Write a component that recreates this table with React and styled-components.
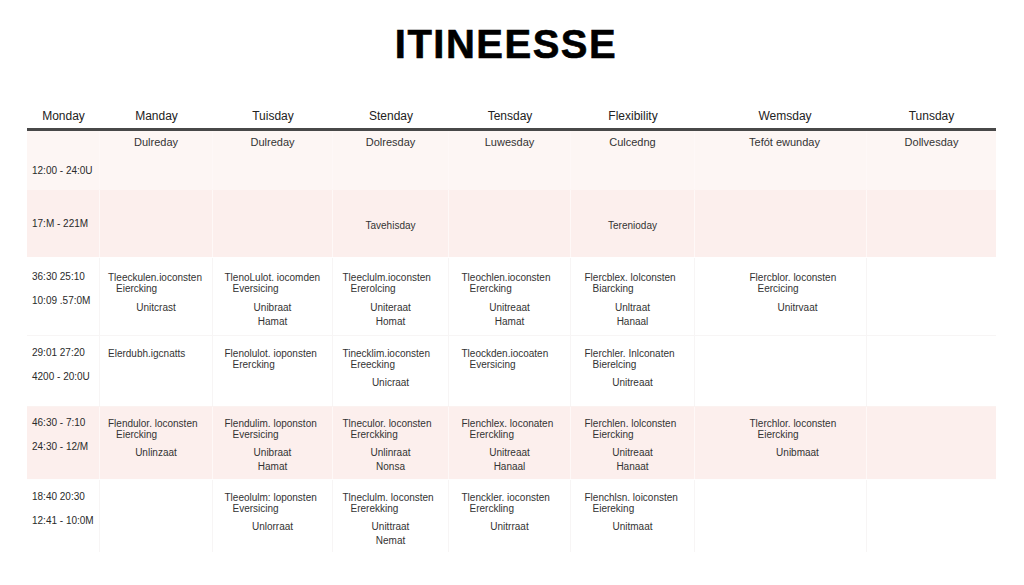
import React from "react";
import styled, { createGlobalStyle } from "styled-components";

const Global = createGlobalStyle`
  html, body { margin: 0; padding: 0; background: #ffffff; }
  body { font-family: "Liberation Sans", Arial, sans-serif; color: #222; }
`;

const COLS = "73px 113px 120px 116px 122px 124px 172px 129px";

const Page = styled.div`
  width: 1024px;
  height: 585px;
  background: #fff;
  padding-top: 24px;
  box-sizing: border-box;
  overflow: hidden;
`;

const Title = styled.h1`
  margin: 0 0 40px;
  text-align: center;
  font-family: "Liberation Sans", Arial, sans-serif;
  font-weight: 700;
  font-size: 40px;
  line-height: 40px;
  letter-spacing: 1.5px;
  color: #000;
  padding-right: 12px;
  -webkit-text-stroke: 0.6px #000;
`;

const Table = styled.div`
  margin-left: 27px;
  width: 969px;
  display: flex;
  flex-direction: column;
`;

const HeaderRow = styled.div`
  display: grid;
  grid-template-columns: ${COLS};
  height: 24px;
  border-bottom: 3px solid #484848;
`;

const HeadCell = styled.div`
  font-size: 12px;
  line-height: 24px;
  text-align: center;
  color: #222;
  padding-left: ${(p) => p.$shift || 0}px;
`;

const Row = styled.div`
  display: grid;
  grid-template-columns: ${COLS};
  height: ${(p) => p.$h}px;
  background: ${(p) => p.$bg};
  border-bottom: 1px solid ${(p) => p.$line};
  box-sizing: border-box;
`;

const Cell = styled.div`
  border-right: 1px solid ${(p) => p.$line};
  display: flex;
  flex-direction: column;
  align-items: center;
  padding-top: ${(p) => p.$pad}px;
  padding-left: ${(p) => p.$shift || 0}px;
  box-sizing: border-box;
  &:last-child { border-right: none; }
`;

const CenterCell = styled.div`
  border-right: 1px solid ${(p) => p.$line};
  display: flex;
  align-items: center;
  justify-content: center;
  padding-top: 4px;
  font-size: 10px;
  color: #333;
`;

const TimeCell = styled.div`
  border-right: 1px solid ${(p) => p.$line};
  display: flex;
  flex-direction: column;
  justify-content: ${(p) => p.$justify || "flex-start"};
  gap: 12px;
  padding: ${(p) => p.$pad}px 0 ${(p) => p.$padBottom || 0}px 5px;
  box-sizing: border-box;
`;

const Time = styled.div`
  font-size: 10px;
  line-height: 12px;
  color: #2a2a2a;
  white-space: nowrap;
`;

const DayLabel = styled.div`
  font-size: 11px;
  line-height: 12px;
  color: #333;
  white-space: nowrap;
`;

const Entry = styled.div`
  min-width: 96px;
  display: flex;
  flex-direction: column;
`;

const Line = styled.div`
  font-size: 10px;
  line-height: 11px;
  color: #333;
  white-space: nowrap;
  padding-left: ${(p) => (p.$indent ? 8 : 0)}px;
`;

const Sub = styled.div`
  font-size: 10px;
  line-height: 14px;
  color: #333;
  text-align: center;
  white-space: nowrap;
  margin-top: ${(p) => (p.$first ? p.$gap : 0)}px;
`;

const heads = ["Monday", "Manday", "Tuisday", "Stenday", "Tensday", "Flexibility", "Wemsday", "Tunsday"];
const labels = ["Dulreday", "Dulreday", "Dolresday", "Luwesday", "Culcedng", "Tefót ewunday", "Dollvesday"];

const PINK1 = "#fdf6f4";
const PINK2 = "#fcefed";
const SEAM_PINK = "#fef8f7";
const SEAM_WHITE = "#f7f5f5";

const rows = [
  {
    bg: "#ffffff", h: 78, pad: 13, line: SEAM_WHITE,
    times: ["36:30 25:10", "10:09 .57:0M"],
    cells: [
      ["Tleeckulen.ioconsten", "Eiercking", ["Unitcrast"]],
      ["TlenoLulot. iocomden", "Eversicing", ["Unibraat", "Hamat"]],
      ["Tleeclulm.ioconsten", "Ererolcing", ["Uniteraat", "Homat"]],
      ["Tleochlen.ioconsten", "Erercking", ["Unitreaat", "Hamat"]],
      ["Flercblex. lolconsten", "Biarcking", ["Unltraat", "Hanaal"]],
      ["Flercblor. loconsten", "Eercicing", ["Unitrvaat"]],
      null,
    ],
  },
  {
    bg: "#ffffff", h: 71, pad: 11, line: "#fbf2f0",
    times: ["29:01 27:20", "4200 - 20:0U"],
    cells: [
      ["Elerdubh.igcnatts", null, []],
      ["Flenolulot. ioponsten", "Erercking", []],
      ["Tinecklim.ioconsten", "Ereecking", ["Unicraat"]],
      ["Tleockden.iocoaten", "Eversicing", []],
      ["Flerchler. Inlconaten", "Bierelcing", ["Unitreaat"]],
      null,
      null,
    ],
  },
  {
    bg: PINK2, h: 73, pad: 10, line: "#fefefe",
    times: ["46:30 - 7:10", "24:30 - 12/M"],
    cells: [
      ["Flendulor. loconsten", "Eiercking", ["Unlinzaat"]],
      ["Flendulim. loponston", "Eversicing", ["Unibraat", "Hamat"]],
      ["Tlneculor. loconsten", "Ererckking", ["Unlinraat", "Nonsa"]],
      ["Flenchlex. loconaten", "Ererckling", ["Unitreaat", "Hanaal"]],
      ["Flerchlen. lolconsten", "Eiercking", ["Unitreaat", "Hanaat"]],
      ["Tlerchlor. loconsten", "Eiercking", ["Unibmaat"]],
      null,
    ],
  },
  {
    bg: "#ffffff", h: 73, pad: 11, line: "#ffffff",
    times: ["18:40 20:30", "12:41 - 10:0M"],
    cells: [
      null,
      ["Tleeolulm: loponsten", "Eversicing", ["Unlorraat"]],
      ["Tlneclulm. loconsten", "Ererekking", ["Unittraat", "Nemat"]],
      ["Tlenckler. ioconsten", "Ererckling", ["Unitrraat"]],
      ["Flenchlsn. loiconsten", "Eiereking", ["Unitmaat"]],
      null,
      null,
    ],
  },
];

function EntryBlock({ data, gap }) {
  if (!data) return null;
  const [l1, l2, subs] = data;
  return (
    <Entry>
      <Line>{l1}</Line>
      {l2 && <Line $indent>{l2}</Line>}
      {subs.map((s, i) => (
        <Sub key={i} $first={i === 0} $gap={gap}>{s}</Sub>
      ))}
    </Entry>
  );
}

export default function App() {
  return (
    <>
      <Global />
      <Page>
        <Title>ITINEESSE</Title>
        <Table>
          <HeaderRow>
            {heads.map((h, i) => (
              <HeadCell key={i} $shift={i === 6 ? 8 : 0}>{h}</HeadCell>
            ))}
          </HeaderRow>

          <Row $h={59} $bg={PINK1} $line={PINK1}>
            <TimeCell $line={SEAM_PINK} $justify="flex-end" $pad={0} $padBottom={12}>
              <Time>12:00 - 24:0U</Time>
            </TimeCell>
            {labels.map((l, i) => (
              <Cell key={i} $line={SEAM_PINK} $pad={5} $shift={i === 5 ? 8 : 0}>
                <DayLabel>{l}</DayLabel>
              </Cell>
            ))}
          </Row>

          <Row $h={68} $bg={PINK2} $line="#ffffff">
            <TimeCell $line={SEAM_PINK} $justify="center" $pad={0}>
              <Time>17:M - 221M</Time>
            </TimeCell>
            <CenterCell $line={SEAM_PINK} />
            <CenterCell $line={SEAM_PINK} />
            <CenterCell $line={SEAM_PINK}>Tavehisday</CenterCell>
            <CenterCell $line={SEAM_PINK} />
            <CenterCell $line={SEAM_PINK}>Terenioday</CenterCell>
            <CenterCell $line={SEAM_PINK} />
            <CenterCell $line="transparent" />
          </Row>

          {rows.map((r, ri) => (
            <Row key={ri} $h={r.h} $bg={r.bg} $line={r.line}>
              <TimeCell $line={r.bg === PINK2 ? SEAM_PINK : SEAM_WHITE} $pad={r.pad}>
                {r.times.map((t, i) => (
                  <Time key={i}>{t}</Time>
                ))}
              </TimeCell>
              {r.cells.map((c, ci) => (
                <Cell
                  key={ci}
                  $line={r.bg === PINK2 ? SEAM_PINK : SEAM_WHITE}
                  $pad={r.pad + 1}
                  $shift={ci === 5 ? 34 : 0}
                >
                  <EntryBlock data={c} gap={r.pad > 12 ? 7 : 6} />
                </Cell>
              ))}
            </Row>
          ))}
        </Table>
      </Page>
    </>
  );
}
